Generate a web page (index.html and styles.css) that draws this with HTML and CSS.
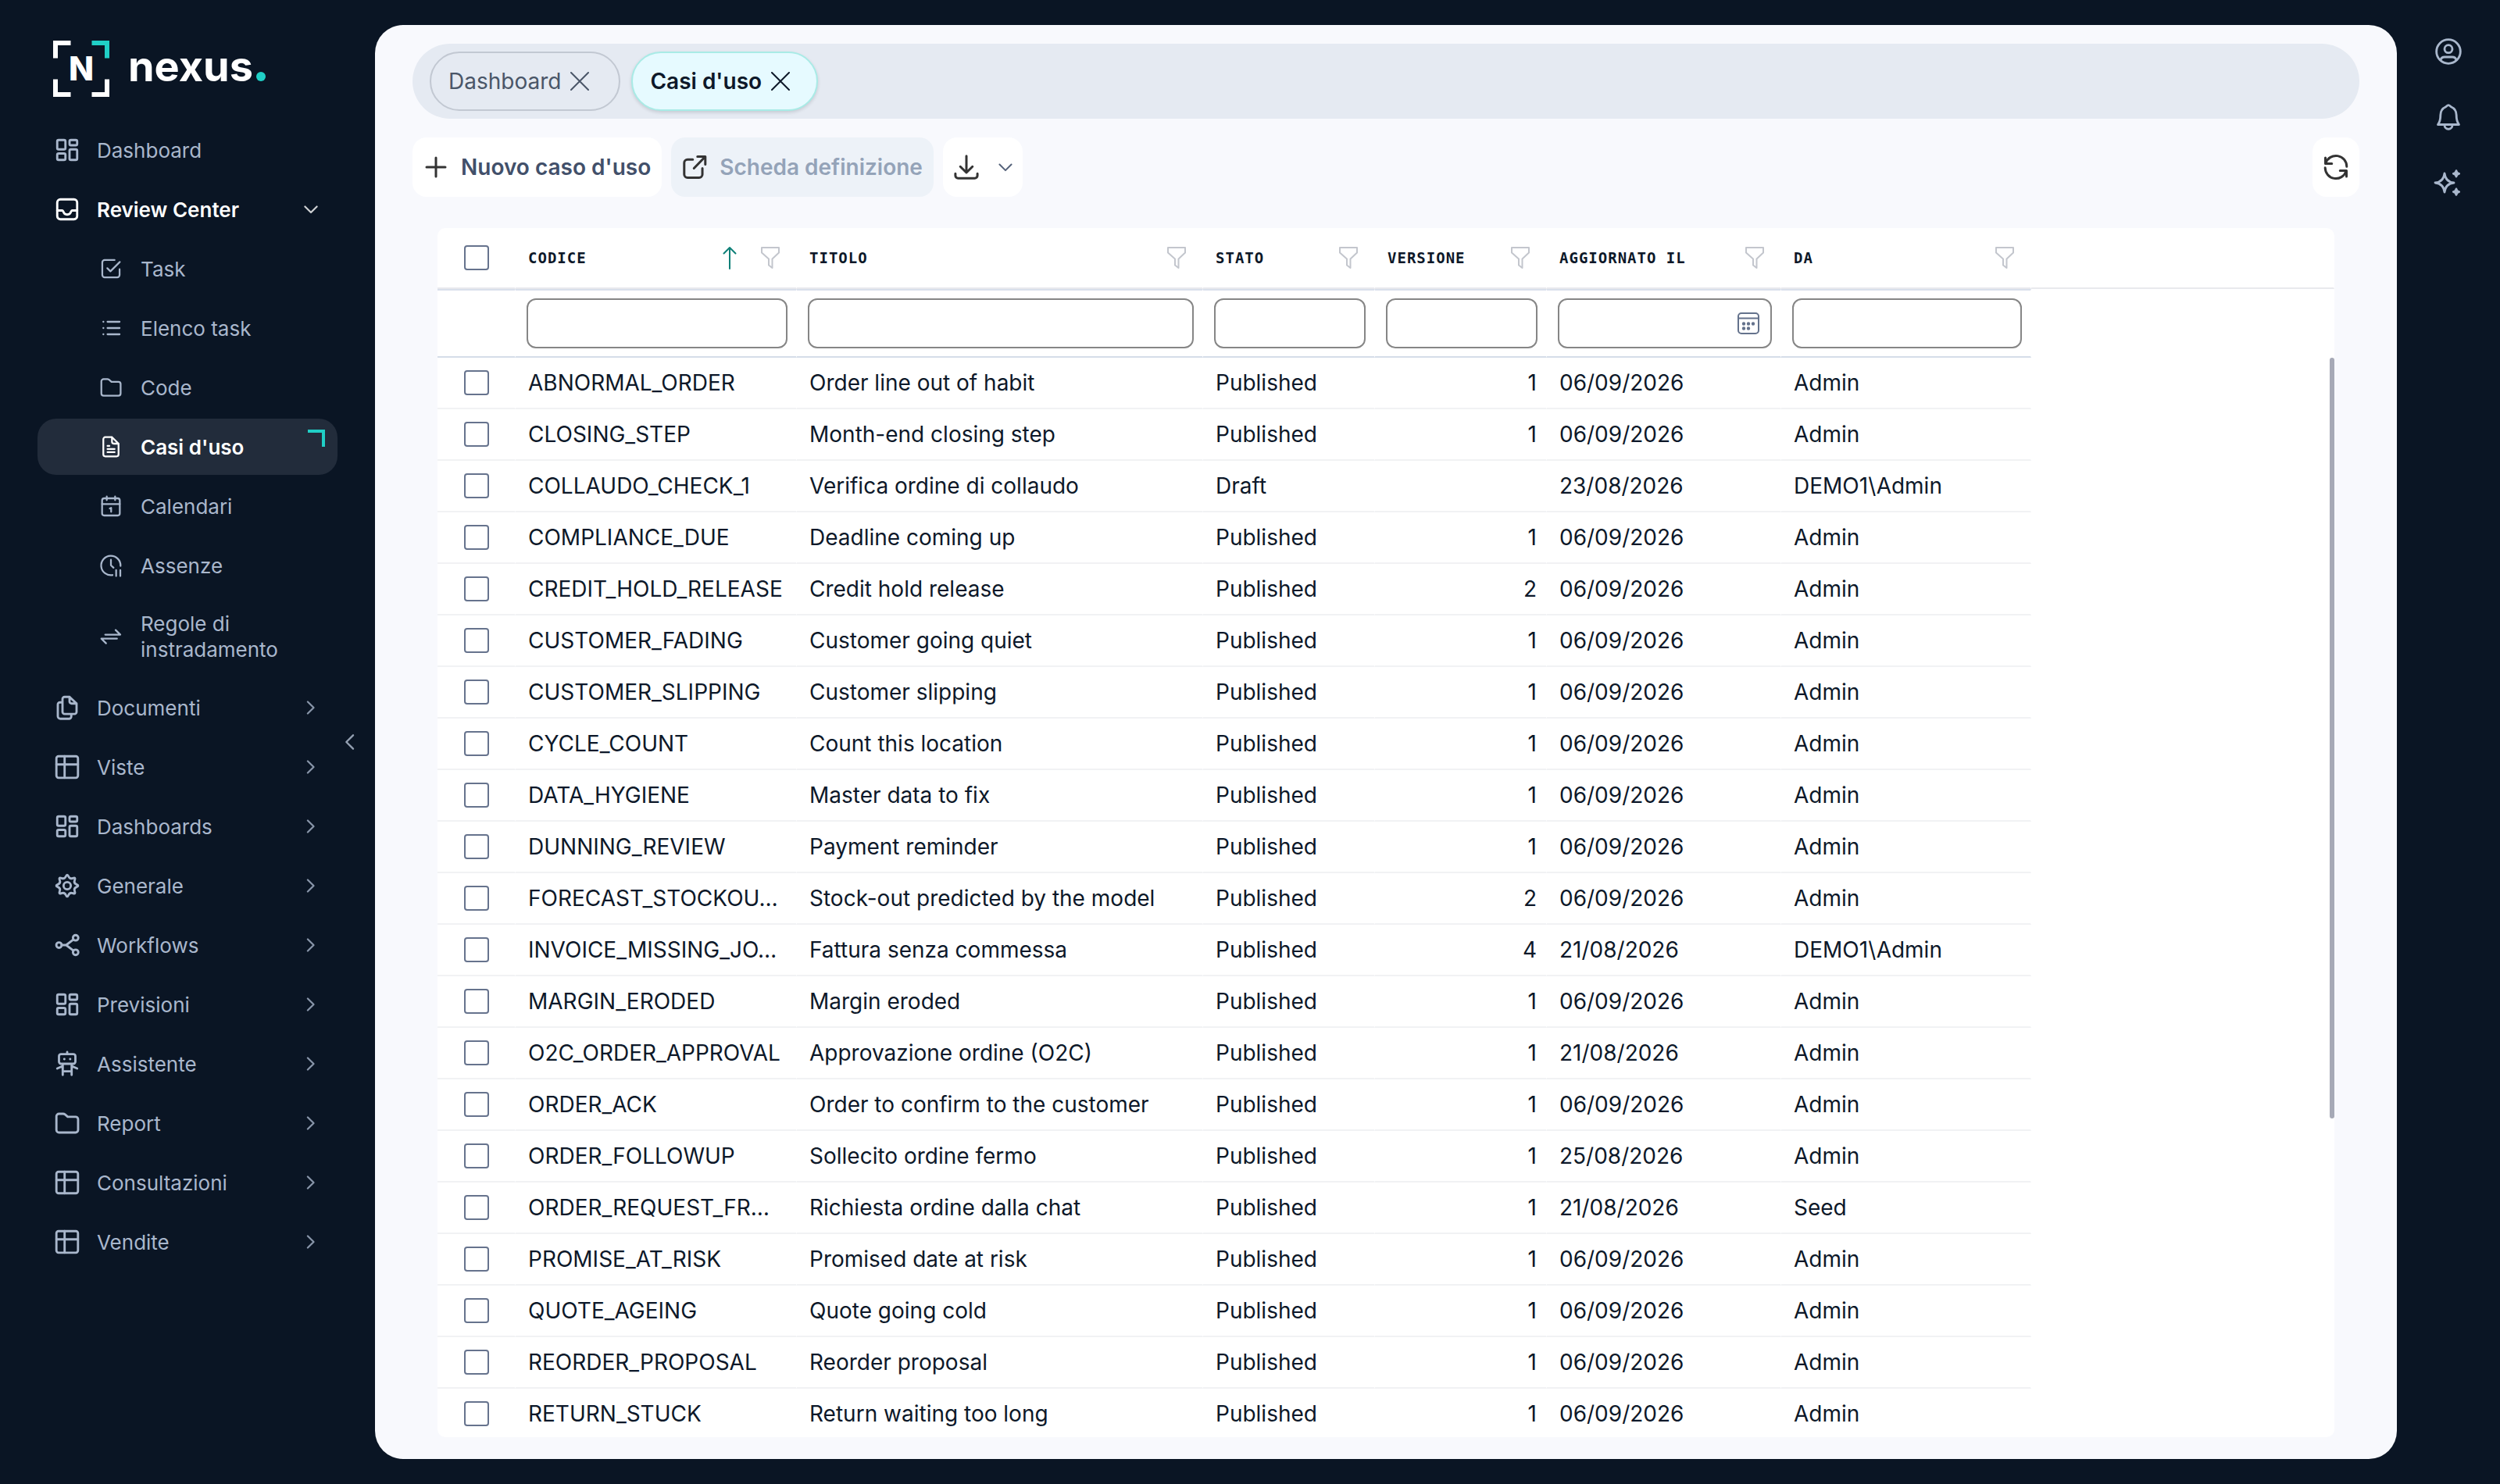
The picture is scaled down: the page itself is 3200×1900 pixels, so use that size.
FILE: index.html
```html
<!DOCTYPE html>
<html lang="it">
<head>
<meta charset="utf-8">
<meta name="viewport" content="width=device-width, initial-scale=1">
<title>Nexus - Casi d'uso</title>
<link rel="stylesheet" href="styles.css">
</head>
<body>
<svg class="sprite" aria-hidden="true">
  <symbol id="i-board" viewBox="0 0 24 24"><rect x="3.5" y="3.5" width="7" height="8" rx="1.2"/><rect x="3.5" y="15" width="7" height="5.5" rx="1.2"/><rect x="14" y="3.5" width="6.5" height="4.5" rx="1.2"/><rect x="14" y="11.5" width="6.5" height="9" rx="1.2"/></symbol>
  <symbol id="i-inbox" viewBox="0 0 24 24"><rect x="3.5" y="3.5" width="17" height="17" rx="2.6"/><path d="M3.5 13h4.2c.4 0 .7.3.9.7.5 1.600 1.700 2.800 3.400 2.800s2.900-1.200 3.400-2.800c.2-.4.5-.7.9-.7h4.200"/></symbol>
  <symbol id="i-check" viewBox="0 0 24 24"><path d="M15.500 3.700H6A2.300 2.300 0 0 0 3.700 6v12A2.300 2.300 0 0 0 6 20.300h12a2.300 2.300 0 0 0 2.300-2.300v-5.500M8.500 11.500l3 3 9-9"/></symbol>
  <symbol id="i-list" viewBox="0 0 24 24"><path d="M8.700 6h11.600M8.700 12h11.600M8.700 18h11.600M4.700 6h.1M4.700 12h.1M4.700 18h.1"/></symbol>
  <symbol id="i-folder" viewBox="0 0 24 24"><path d="M2.800 6.200A2.200 2.200 0 0 1 5 4h3.600c.6 0 1.100.2 1.600.6l2.300 2h6.700a2.100 2.100 0 0 1 2.100 2.100v9.200a2.100 2.100 0 0 1-2.100 2.100H5a2.200 2.200 0 0 1-2.200-2.200z"/></symbol>
  <symbol id="i-doc" viewBox="0 0 24 24"><path d="M13 2.800H6.500a1.800 1.800 0 0 0-1.800 1.800v14.800c0 1 .8 1.800 1.800 1.800h11c1 0 1.800-.8 1.800-1.800V9zM13 2.800V7.200c0 1 .8 1.800 1.800 1.800h4.500M8.700 11.200h1.800M8.700 14.200h6.800M8.700 17.200h6.800"/></symbol>
  <symbol id="i-cal" viewBox="0 0 24 24"><rect x="3.500" y="4.500" width="17" height="16.500" rx="2"/><path d="M3.500 10h17M8 2.800v3.400M16 2.800v3.400M10.900 14.300l1.300-.6v3.800"/></symbol>
  <symbol id="i-clock" viewBox="0 0 24 24"><path d="M13.500 21.200A9.300 9.300 0 1 1 21.200 12.500M12 6.500V11.800l2.500 2.300M17 16.500v5.700M21 16.500v5.700"/></symbol>
  <symbol id="i-swap" viewBox="0 0 24 24"><path d="M6.500 10.200h14.500l-4.500-4.500M17.800 14h-15l4.500 4.500"/></symbol>
  <symbol id="i-copy" viewBox="0 0 24 24"><path d="M14 2.800H9.800A1.800 1.800 0 0 0 8 4.600v11a1.800 1.800 0 0 0 1.800 1.800h8.400a1.800 1.800 0 0 0 1.800-1.800V8.500zM14 2.800v4a1.700 1.700 0 0 0 1.700 1.700H20M8 7.500H5.800A1.800 1.800 0 0 0 4 9.300v10a2.200 2.200 0 0 0 2.200 2.200h7.300a2 2 0 0 0 2-2v-2"/></symbol>
  <symbol id="i-table" viewBox="0 0 24 24"><rect x="2.800" y="2.800" width="18.400" height="18.400" rx="1.800"/><path d="M9.800 2.800v18.400M2.800 9.800h18.400"/></symbol>
  <symbol id="i-gear" viewBox="0 0 24 24"><path d="M19.980 10.890Q22.600 12 19.980 13.110Q17.360 14.220 18.430 16.860Q19.500 19.500 16.860 18.430Q14.220 17.360 13.110 19.980Q12 22.600 10.890 19.980Q9.780 17.360 7.140 18.430Q4.500 19.500 5.570 16.860Q6.640 14.220 4.020 13.110Q1.400 12 4.020 10.890Q6.640 9.780 5.570 7.140Q4.500 4.500 7.140 5.570Q9.780 6.640 10.890 4.020Q12 1.400 13.110 4.020Q14.220 6.640 16.860 5.570Q19.500 4.500 18.430 7.140Q17.360 9.780 19.980 10.890z"/><circle cx="12" cy="12" r="3.100"/></symbol>
  <symbol id="i-flow" viewBox="0 0 24 24"><circle cx="5" cy="12" r="2.300"/><circle cx="19.200" cy="5.800" r="2.300"/><circle cx="19.200" cy="18.200" r="2.300"/><path d="M7.300 12h3.800l6-4.600M11.100 12l6 4.600"/></symbol>
  <symbol id="i-bot" viewBox="0 0 24 24"><rect x="5" y="3.700" width="14" height="8.300" rx="1.800"/><path d="M12 2v1.700M9.500 8h.1M14.500 8h.1M8.200 21.500V12.700M15.800 21.500V12.700M8.200 18.400h7.600M8 14l-4.500 2M16 14l4.500 2"/></symbol>
  <symbol id="i-right" viewBox="0 0 24 24"><path d="M8.500 5.500l6.500 6.500-6.500 6.500"/></symbol>
  <symbol id="i-down" viewBox="0 0 24 24"><path d="M5.500 9l6.500 6.500L18.500 9"/></symbol>
  <symbol id="i-left" viewBox="0 0 24 24"><path d="M15 5.500L8.500 12l6.500 6.500"/></symbol>
  <symbol id="i-x" viewBox="0 0 24 24"><path d="M1 1l22 22M23 1L1 23"/></symbol>
  <symbol id="i-plus" viewBox="0 0 24 24"><path d="M12 4v16M4 12h16"/></symbol>
  <symbol id="i-open" viewBox="0 0 24 24"><path d="M10.500 5.500H6A2.800 2.800 0 0 0 3.200 8.300v9.900A2.800 2.800 0 0 0 6 21h9.900a2.800 2.800 0 0 0 2.800-2.800v-5.200M14.500 3h6.700v6.700M21 3.200L11.500 13"/></symbol>
  <symbol id="i-down-tray" viewBox="0 0 24 24"><path d="M12 2.500v14M6.800 11.500L12 16.700l5.200-5.200M2.600 17.500v1.700a2.300 2.300 0 0 0 2.300 2.300h14.200a2.300 2.300 0 0 0 2.300-2.300v-1.700"/></symbol>
  <symbol id="i-sync" viewBox="0 0 24 24"><path d="M3.300 8.500A9.200 9.200 0 0 1 21.200 11.500M20.700 15.500A9.200 9.200 0 0 1 2.800 12.500M3 4v5h5.500M21 20v-5h-5.500"/></symbol>
  <symbol id="i-user" viewBox="0 0 24 24"><circle cx="12" cy="12" r="9.200"/><circle cx="12" cy="10" r="3"/><path d="M6 18.500c.4-1.800 1.500-2.300 3-2.300h6c1.500 0 2.600.5 3 2.300"/></symbol>
  <symbol id="i-bell" viewBox="0 0 24 24"><path d="M12 2.800c-1 0-1.300.9-2 1.200C7.400 5.200 5.900 7.400 5.900 10.300c0 3.200-.2 5-2 7.400h16.200c-1.800-2.400-2-4.200-2-7.400 0-2.900-1.500-5.100-4.100-6.300-.7-.3-1-1.200-2-1.200zM9 18.200a3 3 0 0 0 6 0"/></symbol>
  <symbol id="i-spark" viewBox="0 0 24 24"><path d="M9 4.700c.5 4.400 2.600 6.800 7.200 7.300-4.600.5-6.700 2.900-7.200 7.300-.5-4.400-2.600-6.800-7.200-7.300C6.400 11.500 8.500 9.100 9 4.700z"/><path class="dot" d="M18 2.800c.3 1.500.8 2 2.200 2.200-1.400.3-1.900.8-2.200 2.200-.3-1.400-.8-1.900-2.200-2.200 1.400-.2 1.900-.7 2.200-2.200zM18 16.800c.3 1.500.8 2 2.200 2.200-1.400.3-1.900.8-2.200 2.200-.3-1.400-.8-1.900-2.200-2.200 1.400-.2 1.900-.7 2.200-2.200z"/></symbol>
  <symbol id="i-filter" viewBox="0 0 28 30"><path d="M3 2h22v6.500l-8.500 8V28L12 24.500v-8L3 8.500z"/></symbol>
  <symbol id="i-sort" viewBox="0 0 28 30"><path d="M14 29V2M6.500 9.500L14 2l7.500 7.500"/></symbol>
  <symbol id="i-date" viewBox="0 0 28 28"><rect x="1" y="1" width="26" height="26" rx="4"/><path d="M1 7.500h26"/><g class="dot"><circle cx="8" cy="14.500" r="1.200"/><circle cx="14" cy="14.500" r="1.200"/><circle cx="20" cy="14.500" r="1.200"/><circle cx="8" cy="20.500" r="1.200"/><circle cx="14" cy="20.500" r="1.200"/></g></symbol>
</svg>

<div class="shell">
  <aside class="sidebar">
    <div class="side-main">
      <a class="logo" href="#" aria-label="nexus">
        <span class="mark">
          <svg viewBox="0 0 72 72" aria-hidden="true"><path d="M3 22.500V3h19.500M3 49.500V69h19.500M49.500 69H69V49.500"/><path class="teal" d="M49.500 3H69v19.500"/></svg>
          <span class="mark-letter">N</span>
        </span>
        <span class="word">nexus</span><span class="word-dot"></span>
      </a>
      <nav class="nav">
        <a class="item" href="#"><svg><use href="#i-board"/></svg><span>Dashboard</span></a>
        <a class="item open" href="#"><svg><use href="#i-inbox"/></svg><span>Review Center</span><svg class="chev"><use href="#i-down"/></svg></a>
        <a class="item sub" href="#"><svg><use href="#i-check"/></svg><span>Task</span></a>
        <a class="item sub" href="#"><svg><use href="#i-list"/></svg><span>Elenco task</span></a>
        <a class="item sub" href="#"><svg><use href="#i-folder"/></svg><span>Code</span></a>
        <a class="item sub active" href="#" aria-current="page"><svg><use href="#i-doc"/></svg><span>Casi d'uso</span></a>
        <a class="item sub" href="#"><svg><use href="#i-cal"/></svg><span>Calendari</span></a>
        <a class="item sub" href="#"><svg><use href="#i-clock"/></svg><span>Assenze</span></a>
        <a class="item sub" href="#"><svg><use href="#i-swap"/></svg><span>Regole di instradamento</span></a>
        <a class="item" href="#"><svg><use href="#i-copy"/></svg><span>Documenti</span><svg class="chev"><use href="#i-right"/></svg></a>
        <a class="item" href="#"><svg><use href="#i-table"/></svg><span>Viste</span><svg class="chev"><use href="#i-right"/></svg></a>
        <a class="item" href="#"><svg><use href="#i-board"/></svg><span>Dashboards</span><svg class="chev"><use href="#i-right"/></svg></a>
        <a class="item" href="#"><svg><use href="#i-gear"/></svg><span>Generale</span><svg class="chev"><use href="#i-right"/></svg></a>
        <a class="item" href="#"><svg><use href="#i-flow"/></svg><span>Workflows</span><svg class="chev"><use href="#i-right"/></svg></a>
        <a class="item" href="#"><svg><use href="#i-board"/></svg><span>Previsioni</span><svg class="chev"><use href="#i-right"/></svg></a>
        <a class="item" href="#"><svg><use href="#i-bot"/></svg><span>Assistente</span><svg class="chev"><use href="#i-right"/></svg></a>
        <a class="item" href="#"><svg><use href="#i-folder"/></svg><span>Report</span><svg class="chev"><use href="#i-right"/></svg></a>
        <a class="item" href="#"><svg><use href="#i-table"/></svg><span>Consultazioni</span><svg class="chev"><use href="#i-right"/></svg></a>
        <a class="item" href="#"><svg><use href="#i-table"/></svg><span>Vendite</span><svg class="chev"><use href="#i-right"/></svg></a>
      </nav>
    </div>
    <button class="collapse" type="button" aria-label="Comprimi menu"><svg><use href="#i-left"/></svg></button>
  </aside>

  <main class="panel">
    <div class="tabs">
      <div class="tab"><a href="#">Dashboard</a><button type="button" aria-label="Chiudi Dashboard"><svg><use href="#i-x"/></svg></button></div>
      <div class="tab current"><a href="#">Casi d'uso</a><button type="button" aria-label="Chiudi Casi d'uso"><svg><use href="#i-x"/></svg></button></div>
    </div>
    <div class="toolbar">
      <button class="tool" type="button"><svg><use href="#i-plus"/></svg>Nuovo caso d'uso</button>
      <button class="tool" type="button" disabled><svg><use href="#i-open"/></svg>Scheda definizione</button>
      <button class="tool export" type="button" aria-label="Esporta"><svg><use href="#i-down-tray"/></svg><svg class="caret"><use href="#i-down"/></svg></button>
      <button class="tool refresh" type="button" aria-label="Aggiorna"><svg><use href="#i-sync"/></svg></button>
    </div>
    <div class="card">
      <table class="grid">
        <colgroup><col class="c-check"><col class="c-code"><col class="c-title"><col class="c-short"><col class="c-short"><col class="c-date"><col class="c-by"><col></colgroup>
        <thead>
          <tr class="heads">
            <th class="check"><input type="checkbox" aria-label="Seleziona tutto"></th>
            <th><div class="head"><span>CODICE</span><svg class="sort"><use href="#i-sort"/></svg><svg><use href="#i-filter"/></svg></div></th>
            <th><div class="head"><span>TITOLO</span><svg><use href="#i-filter"/></svg></div></th>
            <th><div class="head"><span>STATO</span><svg><use href="#i-filter"/></svg></div></th>
            <th><div class="head"><span>VERSIONE</span><svg><use href="#i-filter"/></svg></div></th>
            <th><div class="head"><span>AGGIORNATO IL</span><svg><use href="#i-filter"/></svg></div></th>
            <th><div class="head"><span>DA</span><svg><use href="#i-filter"/></svg></div></th>
            <td class="rest"></td>
          </tr>
          <tr class="filters">
            <td></td>
            <td><input class="field" type="text" aria-label="Filtra codice"></td>
            <td><input class="field" type="text" aria-label="Filtra titolo"></td>
            <td><input class="field" type="text" aria-label="Filtra stato"></td>
            <td><input class="field" type="text" aria-label="Filtra versione"></td>
            <td><div class="field date"><input type="text" aria-label="Filtra data"><svg><use href="#i-date"/></svg></div></td>
            <td><input class="field" type="text" aria-label="Filtra autore"></td>
            <td class="rest"></td>
          </tr>
        </thead>
        <tbody>
          <tr><td class="check"><input type="checkbox" aria-label="Seleziona ABNORMAL_ORDER"></td><td>ABNORMAL_ORDER</td><td>Order line out of habit</td><td>Published</td><td class="num">1</td><td>06/09/2026</td><td>Admin</td><td class="rest"></td></tr>
          <tr><td class="check"><input type="checkbox" aria-label="Seleziona CLOSING_STEP"></td><td>CLOSING_STEP</td><td>Month-end closing step</td><td>Published</td><td class="num">1</td><td>06/09/2026</td><td>Admin</td><td class="rest"></td></tr>
          <tr><td class="check"><input type="checkbox" aria-label="Seleziona COLLAUDO_CHECK_1"></td><td>COLLAUDO_CHECK_1</td><td>Verifica ordine di collaudo</td><td>Draft</td><td class="num"></td><td>23/08/2026</td><td>DEMO1\Admin</td><td class="rest"></td></tr>
          <tr><td class="check"><input type="checkbox" aria-label="Seleziona COMPLIANCE_DUE"></td><td>COMPLIANCE_DUE</td><td>Deadline coming up</td><td>Published</td><td class="num">1</td><td>06/09/2026</td><td>Admin</td><td class="rest"></td></tr>
          <tr><td class="check"><input type="checkbox" aria-label="Seleziona CREDIT_HOLD_RELEASE"></td><td>CREDIT_HOLD_RELEASE</td><td>Credit hold release</td><td>Published</td><td class="num">2</td><td>06/09/2026</td><td>Admin</td><td class="rest"></td></tr>
          <tr><td class="check"><input type="checkbox" aria-label="Seleziona CUSTOMER_FADING"></td><td>CUSTOMER_FADING</td><td>Customer going quiet</td><td>Published</td><td class="num">1</td><td>06/09/2026</td><td>Admin</td><td class="rest"></td></tr>
          <tr><td class="check"><input type="checkbox" aria-label="Seleziona CUSTOMER_SLIPPING"></td><td>CUSTOMER_SLIPPING</td><td>Customer slipping</td><td>Published</td><td class="num">1</td><td>06/09/2026</td><td>Admin</td><td class="rest"></td></tr>
          <tr><td class="check"><input type="checkbox" aria-label="Seleziona CYCLE_COUNT"></td><td>CYCLE_COUNT</td><td>Count this location</td><td>Published</td><td class="num">1</td><td>06/09/2026</td><td>Admin</td><td class="rest"></td></tr>
          <tr><td class="check"><input type="checkbox" aria-label="Seleziona DATA_HYGIENE"></td><td>DATA_HYGIENE</td><td>Master data to fix</td><td>Published</td><td class="num">1</td><td>06/09/2026</td><td>Admin</td><td class="rest"></td></tr>
          <tr><td class="check"><input type="checkbox" aria-label="Seleziona DUNNING_REVIEW"></td><td>DUNNING_REVIEW</td><td>Payment reminder</td><td>Published</td><td class="num">1</td><td>06/09/2026</td><td>Admin</td><td class="rest"></td></tr>
          <tr><td class="check"><input type="checkbox" aria-label="Seleziona FORECAST_STOCKOU…"></td><td>FORECAST_STOCKOU…</td><td>Stock-out predicted by the model</td><td>Published</td><td class="num">2</td><td>06/09/2026</td><td>Admin</td><td class="rest"></td></tr>
          <tr><td class="check"><input type="checkbox" aria-label="Seleziona INVOICE_MISSING_JO…"></td><td>INVOICE_MISSING_JO…</td><td>Fattura senza commessa</td><td>Published</td><td class="num">4</td><td>21/08/2026</td><td>DEMO1\Admin</td><td class="rest"></td></tr>
          <tr><td class="check"><input type="checkbox" aria-label="Seleziona MARGIN_ERODED"></td><td>MARGIN_ERODED</td><td>Margin eroded</td><td>Published</td><td class="num">1</td><td>06/09/2026</td><td>Admin</td><td class="rest"></td></tr>
          <tr><td class="check"><input type="checkbox" aria-label="Seleziona O2C_ORDER_APPROVAL"></td><td>O2C_ORDER_APPROVAL</td><td>Approvazione ordine (O2C)</td><td>Published</td><td class="num">1</td><td>21/08/2026</td><td>Admin</td><td class="rest"></td></tr>
          <tr><td class="check"><input type="checkbox" aria-label="Seleziona ORDER_ACK"></td><td>ORDER_ACK</td><td>Order to confirm to the customer</td><td>Published</td><td class="num">1</td><td>06/09/2026</td><td>Admin</td><td class="rest"></td></tr>
          <tr><td class="check"><input type="checkbox" aria-label="Seleziona ORDER_FOLLOWUP"></td><td>ORDER_FOLLOWUP</td><td>Sollecito ordine fermo</td><td>Published</td><td class="num">1</td><td>25/08/2026</td><td>Admin</td><td class="rest"></td></tr>
          <tr><td class="check"><input type="checkbox" aria-label="Seleziona ORDER_REQUEST_FR…"></td><td>ORDER_REQUEST_FR…</td><td>Richiesta ordine dalla chat</td><td>Published</td><td class="num">1</td><td>21/08/2026</td><td>Seed</td><td class="rest"></td></tr>
          <tr><td class="check"><input type="checkbox" aria-label="Seleziona PROMISE_AT_RISK"></td><td>PROMISE_AT_RISK</td><td>Promised date at risk</td><td>Published</td><td class="num">1</td><td>06/09/2026</td><td>Admin</td><td class="rest"></td></tr>
          <tr><td class="check"><input type="checkbox" aria-label="Seleziona QUOTE_AGEING"></td><td>QUOTE_AGEING</td><td>Quote going cold</td><td>Published</td><td class="num">1</td><td>06/09/2026</td><td>Admin</td><td class="rest"></td></tr>
          <tr><td class="check"><input type="checkbox" aria-label="Seleziona REORDER_PROPOSAL"></td><td>REORDER_PROPOSAL</td><td>Reorder proposal</td><td>Published</td><td class="num">1</td><td>06/09/2026</td><td>Admin</td><td class="rest"></td></tr>
          <tr><td class="check"><input type="checkbox" aria-label="Seleziona RETURN_STUCK"></td><td>RETURN_STUCK</td><td>Return waiting too long</td><td>Published</td><td class="num">1</td><td>06/09/2026</td><td>Admin</td><td class="rest"></td></tr>
        </tbody>
      </table>
      <div class="track"><div class="thumb"></div></div>
    </div>
  </main>

  <aside class="rail">
    <button type="button" aria-label="Profilo"><svg><use href="#i-user"/></svg></button>
    <button type="button" aria-label="Notifiche"><svg><use href="#i-bell"/></svg></button>
    <button type="button" aria-label="Assistente"><svg><use href="#i-spark"/></svg></button>
  </aside>
</div>
</body>
</html>
```
FILE: styles.css
```css
:root {
  --night: #0a1524;
  --mist: #a9b7cc;
  --teal: #20cfc6;
  --ink: #0d1829;
}

* { box-sizing: border-box; }

body {
  margin: 0;
  background: var(--night);
  color: var(--ink);
  font-family: Inter, "Liberation Sans", sans-serif;
  font-size: 28px;
  line-height: 32px;
}

button {
  margin: 0;
  padding: 0;
  border: 0;
  background: none;
  color: inherit;
  font: inherit;
}

a { color: inherit; text-decoration: none; }

svg {
  display: block;
  flex: none;
  fill: none;
  stroke: currentColor;
  stroke-width: 1.5;
  stroke-linecap: round;
  stroke-linejoin: round;
}

.dot { fill: currentColor; }
.sprite { position: absolute; width: 0; height: 0; }

.shell { display: flex; height: 100vh; }

/* Sidebar */
.sidebar { display: flex; flex: none; width: 480px; align-items: center; }
.side-main { align-self: stretch; width: 432px; padding: 52px 0 0 48px; }

.logo { display: flex; align-items: center; height: 72px; margin-left: 20px; color: #fff; }
.mark { display: grid; width: 72px; height: 72px; place-items: center; }
.mark > * { grid-area: 1 / 1; }
.mark svg { width: 72px; height: 72px; stroke-width: 6; stroke-linecap: butt; stroke-linejoin: miter; }
.mark .teal { stroke: var(--teal); }
.mark-letter { font-size: 42px; font-weight: 800; }
.word { align-self: flex-start; margin-left: 24px; font-size: 54px; font-weight: 700; line-height: 66px; }
.word-dot { width: 12px; height: 12px; margin: 20px 0 0 4px; border-radius: 50%; background: var(--teal); }

.nav { display: flex; flex-direction: column; gap: 4px; margin-top: 32px; }
.item {
  position: relative;
  display: flex;
  align-items: center;
  gap: 20px;
  min-height: 72px;
  padding: 18px 20px;
  border-radius: 24px;
  color: var(--mist);
  font-size: 26px;
  line-height: 33px;
}
.item svg { width: 36px; height: 36px; stroke-width: 1.9; }
.item .chev { width: 28px; height: 28px; margin-left: auto; opacity: 0.8; }
.item.open, .item.active { color: #fff; font-weight: 600; }
.item.sub { gap: 22px; padding-left: 78px; }
.item.sub svg { width: 32px; height: 32px; stroke-width: 1.7; }
.item.active { background: #222c3b; }
.item.active::after {
  content: "";
  position: absolute;
  top: 14px;
  right: 16px;
  width: 18px;
  height: 18px;
  border: solid var(--teal);
  border-width: 4px 4px 0 0;
}

.collapse { display: grid; width: 32px; height: 64px; place-items: center; color: #94a0b2; }
.collapse svg { width: 32px; height: 32px; stroke-width: 1.8; }

/* Content panel */
.panel {
  display: flex;
  flex: 1;
  flex-direction: column;
  min-width: 0;
  margin: 32px 0;
  padding: 24px 48px 28px;
  border-radius: 36px;
  background: #f8f9fd;
}

.tabs {
  display: flex;
  flex: none;
  align-items: center;
  gap: 14px;
  height: 96px;
  padding: 0 22px;
  border-radius: 48px;
  background: #e5eaf2;
}
.tab {
  display: flex;
  align-items: center;
  gap: 12px;
  height: 76px;
  padding: 0 38px 0 22px;
  border: 2px solid #c2c8d2;
  border-radius: 38px;
  color: #4a5668;
}
.tab svg { width: 24px; height: 24px; stroke-width: 2; }
.tab.current {
  padding-right: 34px;
  border-color: #a9ebe6;
  background: #e6faff;
  box-shadow: 0 2px 4px rgb(10 21 36 / 15%);
  color: var(--ink);
  font-weight: 600;
}

.toolbar { display: flex; flex: none; gap: 12px; margin-top: 24px; }
.tool {
  display: flex;
  align-items: center;
  gap: 14px;
  height: 76px;
  padding: 0 14px 0 12px;
  border-radius: 18px;
  background: #fff;
  color: #42506a;
  font-weight: 600;
}
.tool svg { width: 36px; height: 36px; color: #333; stroke-width: 2; }
.tool:disabled { background: #edf2f8; color: #94a3b8; }
.tool.export { gap: 18px; padding-right: 8px; }
.tool.export .caret { width: 28px; height: 28px; color: #55627a; stroke-width: 1.7; }
.tool.refresh { margin-left: auto; padding: 0 12px; }

/* Data grid */
.card {
  position: relative;
  flex: 1;
  min-height: 0;
  margin: 40px 32px 0;
  overflow: hidden;
  border-radius: 10px;
  background: #fff;
}
.grid { width: 100%; border-spacing: 0; table-layout: fixed; }
.c-check { width: 100px; }
.c-code { width: 360px; }
.c-title { width: 520px; }
.c-short { width: 220px; }
.c-date { width: 300px; }
.c-by { width: 320px; }

.grid th, .grid td {
  height: 66px;
  padding: 0 14px 0 16px;
  border: solid #fff;
  border-width: 0 1px 2px 0;
  border-bottom-color: #f1f2f4;
  text-align: left;
  white-space: nowrap;
}
.grid .check { padding: 0 34px; }
.grid .num { padding-right: 12px; text-align: right; }
.grid td.rest { border-color: transparent; }

.heads th, .grid .heads td { height: 78px; border-bottom-color: #e8e9ed; }
.grid .heads .rest { border-bottom-color: #e8e9ed; }
.head {
  display: flex;
  align-items: center;
  gap: 24px;
  padding-right: 5px;
  font: 700 19px/24px "DejaVu Sans Mono", monospace;
  letter-spacing: 1px;
}
.head span { margin-right: auto; }
.head svg { width: 28px; height: 30px; color: #c3c6cd; stroke-width: 2; }
.head .sort { color: #0f8078; }

.grid .filters td {
  height: 88px;
  padding: 10px 11px 10px 14px;
  border-top: 2px solid #d9dfeb;
  border-bottom-color: #d5dde8;
}
.grid .filters .rest { border-color: transparent; }
.field {
  display: flex;
  align-items: center;
  width: 100%;
  height: 64px;
  padding: 0 14px;
  border: 2px solid #868686;
  border-radius: 12px;
  background: #fff;
  font: inherit;
}
.date input { flex: 1; min-width: 0; border: 0; background: none; font: inherit; }
.date svg { width: 28px; height: 28px; color: #64728c; stroke-width: 2; }

input[type="checkbox"] {
  display: block;
  width: 32px;
  height: 32px;
  margin: 0;
  appearance: none;
  border: 2px solid #66738d;
  border-radius: 4px;
  background: #fff;
}

.track { position: absolute; top: 166px; right: 0; bottom: 0; width: 6px; }
.thumb { height: 70.5%; border-radius: 3px; background: #a6a9b6; }

/* Right rail */
.rail { display: flex; flex: none; flex-direction: column; align-items: center; gap: 44px; width: 132px; padding-top: 46px; color: var(--mist); }
.rail svg { width: 40px; height: 40px; stroke-width: 1.7; }
```
